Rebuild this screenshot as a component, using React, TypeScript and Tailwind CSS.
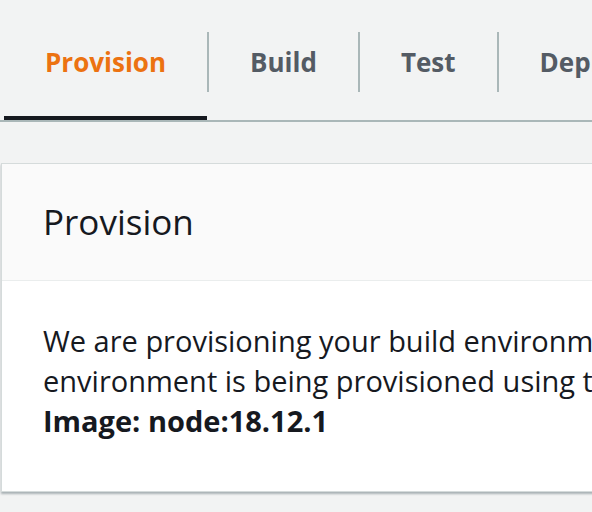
import React from 'react';

const tabs = ['Provision', 'Build', 'Test', 'Deploy'];

const App = () => {
    const active = 'Provision';

    return (
        <div className="w-[592px] h-[512px] overflow-hidden bg-[#f2f3f3] font-['Open_Sans',sans-serif]">
            <div className="flex items-center h-[122px] pt-[4px] pl-[4px] border-b-2 border-[#aab7b8] whitespace-nowrap">
                {tabs.map((tab, i) => (
                    <React.Fragment key={tab}>
                        {i > 0 && <div className="w-[2px] h-[60px] bg-[#aab7b8] shrink-0" />}
                        <div className="relative h-full flex items-center px-[41px] shrink-0">
                            <span className={`text-[26px] font-bold ${tab === active ? 'text-[#ec7211]' : 'text-[#545b64]'}`}>
                                {tab}
                            </span>
                            {tab === active && <div className="absolute left-0 right-0 bottom-0 h-[4px] bg-[#16191f]" />}
                        </div>
                    </React.Fragment>
                ))}
            </div>

            <div className="mt-[41px] ml-[1px] w-[900px] bg-white border border-[#d5dbdb] shadow-[0_2px_2px_0_rgba(0,28,36,0.3)]">
                <div className="bg-[#fafafa] border-b border-[#eaeded] px-[41px] py-[36px]">
                    <h2 className="text-[35px] leading-[44px] text-[#16191f]">Provision</h2>
                </div>
                <div className="px-[41px] pt-[40px] pb-[50px] text-[29px] leading-[40px] text-[#16191f]">
                    <p>
                        We are provisioning your build environment. Your build<br />
                        environment is being provisioned using the following image.
                    </p>
                    <p className="font-bold">Image: node:18.12.1</p>
                </div>
            </div>
        </div>
    );
};

export default App;
